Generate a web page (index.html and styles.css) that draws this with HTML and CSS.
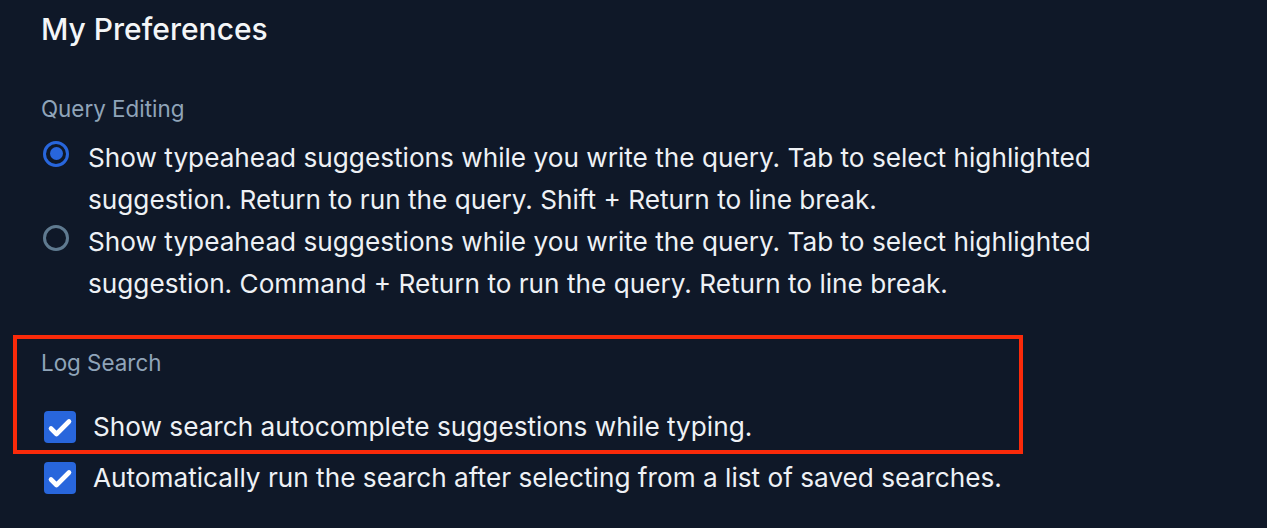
FILE: index.html
```html
<!DOCTYPE html>
<html lang="en">
<head>
<meta charset="utf-8">
<title>My Preferences</title>
<link rel="stylesheet" href="styles.css">
</head>
<body>
<main class="page">
  <h1 class="title">My Preferences</h1>

  <section class="section query">
    <h2 class="label">Query Editing</h2>
    <div class="options">
      <label class="option">
        <span class="radio checked"><span class="dot"></span></span>
        <span class="option-text">Show typeahead suggestions while you write the query. Tab to select highlighted suggestion. Return to run the query. Shift + Return to line break.</span>
      </label>
      <label class="option">
        <span class="radio"></span>
        <span class="option-text">Show typeahead suggestions while you write the query. Tab to select highlighted suggestion. Command + Return to run the query. Return to line break.</span>
      </label>
    </div>
  </section>

  <section class="highlight">
    <h2 class="label">Log Search</h2>
    <label class="check-row first">
      <span class="checkbox"><svg viewBox="0 0 32 32" width="32" height="32"><path d="M7 17.5 L12.5 23 L25 10.5" fill="none" stroke="#fff" stroke-width="4.6" stroke-linecap="round" stroke-linejoin="round"/></svg></span>
      <span class="check-text">Show search autocomplete suggestions while typing.</span>
    </label>
  </section>
  <label class="check-row second">
    <span class="checkbox"><svg viewBox="0 0 32 32" width="32" height="32"><path d="M7 17.5 L12.5 23 L25 10.5" fill="none" stroke="#fff" stroke-width="4.6" stroke-linecap="round" stroke-linejoin="round"/></svg></span>
    <span class="check-text">Automatically run the search after selecting from a list of saved searches.</span>
  </label>
</main>
</body>
</html>
```

FILE: styles.css
```css
html, body {
  margin: 0;
  padding: 0;
  background: #0f1828;
}
body {
  font-family: Inter, "Noto Sans", "Liberation Sans", sans-serif;
  color: #eef1f5;
  height: 528px;
  overflow: hidden;
}
.page {
  padding: 11px 0 0 13px;
}
.title {
  margin: 0 0 0 28px;
  font-size: 30px;
  line-height: 36px;
  font-weight: 500;
  color: #f4f6f8;
}
.section.query {
  margin: 48px 0 0 28px;
}
.label {
  margin: 0;
  font-size: 22.4px;
  line-height: 28px;
  font-weight: 400;
  color: #8fa4b9;
}
.options {
  margin-top: 13.5px;
  display: flex;
  flex-direction: column;
}
.option {
  display: flex;
  align-items: flex-start;
  gap: 19px;
  padding-left: 2px;
}
.option-text {
  font-size: 26.2px;
  line-height: 42px;
  max-width: 1040px;
}
.radio {
  flex: none;
  box-sizing: border-box;
  width: 26px;
  height: 26px;
  margin-top: 4px;
  border-radius: 50%;
  border: 3px solid #5f7a90;
  display: flex;
  align-items: center;
  justify-content: center;
}
.radio.checked {
  border-color: #2866dc;
}
.dot {
  width: 13px;
  height: 13px;
  border-radius: 50%;
  background: #2866dc;
}
.highlight {
  box-sizing: border-box;
  width: 1010px;
  margin-top: 30px;
  border: 4px solid #fa2a0a;
  padding: 10.5px 0 2px 24px;
}
.highlight .label {
  margin-bottom: 29px;
}
.check-row {
  display: flex;
  align-items: center;
  gap: 17px;
  padding-left: 3px;
}
.check-row.second {
  margin-top: 3px;
  padding-left: 31px;
}
.checkbox {
  flex: none;
  width: 32px;
  height: 32px;
  border-radius: 4px;
  background: #2866dc;
  display: flex;
}
.check-text {
  font-size: 26.2px;
  line-height: 42px;
}
```
